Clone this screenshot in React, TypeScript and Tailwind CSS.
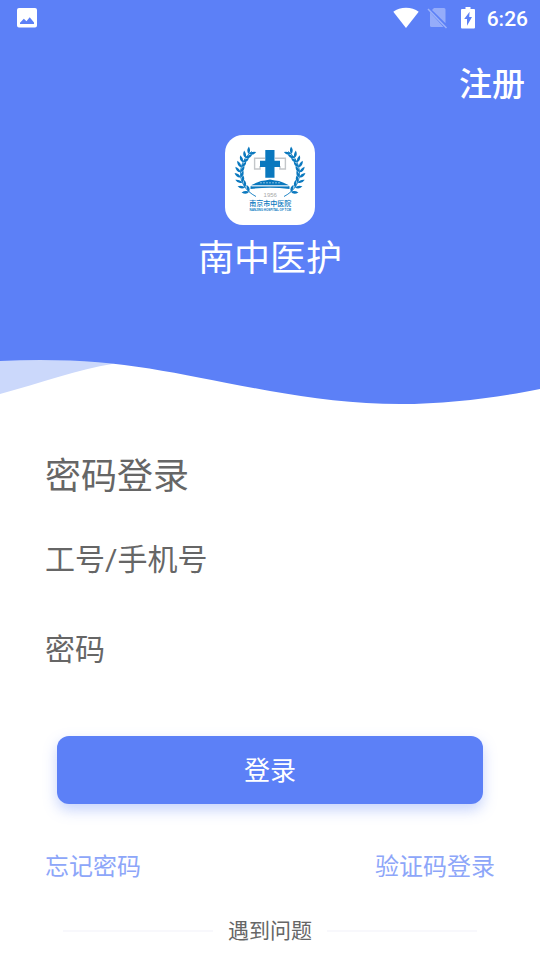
import React, { useState } from 'react';

// Leaf positions along the left branch, 0 = tip, 1 = root
const LEAVES = [0.08, 0.18, 0.28, 0.38, 0.48, 0.58, 0.68, 0.78, 0.88];

const bezier = (t: number, a: number, b: number, c: number, d: number) => {
  const u = 1 - t;
  return u * u * u * a + 3 * u * u * t * b + 3 * u * t * t * c + t * t * t * d;
};

const slope = (t: number, a: number, b: number, c: number, d: number) => {
  const u = 1 - t;
  return 3 * u * u * (b - a) + 6 * u * t * (c - b) + 3 * t * t * (d - c);
};

const Branch: React.FC = () => (
  <g fill="#0a78be">
    <path d="M27 16.500C13 26 9 50 31 61.500" fill="none" stroke="#0a78be" strokeWidth="0.9" />
    {LEAVES.map((t) => {
      const x = bezier(t, 27, 13, 9, 31);
      const y = bezier(t, 16.5, 26, 50, 61.5);
      const angle = (Math.atan2(-slope(t, 16.5, 26, 50, 61.5), -slope(t, 27, 13, 9, 31)) * 180) / Math.PI;
      return (
        <g key={t} transform={`translate(${x} ${y})`}>
          <path d="M0 0Q3-3.400 7.600-0.500Q3.500 2 0 0Z" transform={`rotate(${angle - 42})`} />
          <path d="M0 0Q3-2 7.600 0.500Q3.500 3.400 0 0Z" transform={`rotate(${angle + 24})`} />
        </g>
      );
    })}
  </g>
);

const Logo: React.FC = () => (
  <svg className="w-[90px] h-[90px] bg-white rounded-[18px]" viewBox="0 0 90 90">
    <Branch />
    <g transform="translate(90 0) scale(-1 1)">
      <Branch />
    </g>
    <path d="M40 23.2H29.6V34H35V31M50 23.2H60.4V34H55V31" fill="none" stroke="#c3c6c9" strokeWidth="1.4" />
    <path d="M40.3 15h9.2v10.7H55V32h-5.5v10.8h-9.2V32H35v-6.3h5.3z" fill="#0a78be" />
    <path d="M32 47.5Q36 45.8 40 45.6L45 44.6L50 45.6Q54 45.8 58 47.5L64 50.2H26z" fill="#0a78be" />
    <path d="M35 47.8H55" stroke="#fff" strokeWidth="0.5" strokeDasharray="2 1" />
    <path d="M25.5 54V51.2H64.5V54Q45 51.6 25.5 54Z" fill="#0a78be" />
    <path d="M27 51H63" stroke="#b5d5ec" strokeWidth="0.8" />
    <text x="45.3" y="62" textAnchor="middle" fill="#a8a8a8" className="text-[6px] font-['Liberation_Sans',sans-serif]">1956</text>
    <text x="45.3" y="70.6" textAnchor="middle" fill="#0a78be" className="text-[7px] font-medium font-['Noto_Sans_CJK_SC',sans-serif]">南京市中医院</text>
    <text x="45.3" y="75.6" textAnchor="middle" fill="#0a78be" className="text-[3px] font-bold font-['Liberation_Sans',sans-serif]">NANJING HOSPITAL OF TCM</text>
  </svg>
);

const StatusBar: React.FC = () => (
  <div className="flex items-center justify-between h-9 pl-4 pr-3">
    <svg className="w-[22px] h-[22px]" viewBox="0 0 22 22">
      <path fillRule="evenodd" fill="#fff" d="M3 1h16a2 2 0 0 1 2 2v15.500a2 2 0 0 1-2 2H3a2 2 0 0 1-2-2V3a2 2 0 0 1 2-2zM4 17h14v-1.500l-4.300-5.200-3.200 4-2.700-2.500L4 15.800z" />
    </svg>
    <div className="flex items-center">
      <svg className="w-[26px] h-[22px]" viewBox="0 0 26 22">
        <path d="M13 21L0.300 4.800C7-0.500 19-0.500 25.700 4.800z" fill="#fff" />
      </svg>
      <svg className="w-5 h-[22px] ml-2" viewBox="0 0 20 22">
        <g fill="#fff" fillOpacity="0.35">
          <path d="M7 1h10a1.500 1.500 0 0 1 1.500 1.500V16.200L5 3z" />
          <path d="M3 5.300V18.500A1.500 1.500 0 0 0 4.500 20H16.500z" />
        </g>
        <path d="M1 2L19.500 21" stroke="#fff" strokeOpacity="0.4" strokeWidth="1.500" />
      </svg>
      <svg className="w-[14px] h-[22px] ml-[14px]" viewBox="0 0 14 22">
        <path fillRule="evenodd" fill="#fff" d="M4.500 0h5v2H13a1 1 0 0 1 1 1v17.500a1 1 0 0 1-1 1H1a1 1 0 0 1-1-1V3a1 1 0 0 1 1-1h3.500zM8.600 4.800L3.200 12H6v6.700L11 10H8.200z" />
      </svg>
      <span className="ml-3 pt-0.5 text-[21px] leading-6 font-medium text-white font-[Roboto,sans-serif]">6:26</span>
    </div>
  </div>
);

const Wave: React.FC = () => (
  <svg className="block w-full h-[50px]" viewBox="0 0 540 50" preserveAspectRatio="none">
    <path d="M0 0V39C40 28 80 14 112 9L130 0Z" fill="#cbd8fb" />
    <path d="M0 0V6Q20 5 40 5C130 5 180 20 270 36C310 43 355 49 400 49C450 49 500 42 540 34V0Z" fill="#5c80f7" />
  </svg>
);

interface FieldProps {
  label: string;
  type: string;
  value: string;
  onChange: (value: string) => void;
}

const Field: React.FC<FieldProps> = ({ label, type, value, onChange }) => (
  <input
    type={type}
    aria-label={label}
    placeholder={label}
    value={value}
    onChange={(e) => onChange(e.target.value)}
    className="block w-full h-[60px] text-[30px] text-[#666] placeholder:text-[#666] outline-none"
  />
);

export default function App() {
  const [account, setAccount] = useState('');
  const [password, setPassword] = useState('');

  return (
    <div className="min-h-screen bg-white text-[#666] font-[Roboto,'Noto_Sans_CJK_SC',sans-serif]">
      <header>
        <div className="bg-[#5c80f7] pb-[72px]">
          <StatusBar />
          <div className="flex justify-end pt-[25px] px-[15px]">
            <a href="#register" className="text-[33px] leading-[48px] font-medium text-white">注册</a>
          </div>
          <div className="flex flex-col items-center pt-[26px]">
            <Logo />
            <h1 className="mt-[10px] text-4xl leading-[48px] text-white">南中医护</h1>
          </div>
        </div>
        <Wave />
      </header>

      <main className="px-[45px] pt-12 pb-3">
        <form onSubmit={(e) => e.preventDefault()}>
          <h2 className="text-4xl leading-[48px]">密码登录</h2>
          <div className="flex flex-col gap-[30px] mt-7">
            <Field label="工号/手机号" type="text" value={account} onChange={setAccount} />
            <Field label="密码" type="password" value={password} onChange={setPassword} />
          </div>
          <div className="px-3 mt-[57px]">
            <button
              type="submit"
              className="block w-full h-[68px] rounded-xl bg-[#5c80f7] pt-0.5 text-[26px] text-white shadow-[0_6px_14px_rgba(92,128,247,0.35)]"
            >
              登录
            </button>
          </div>
        </form>

        <div className="flex justify-between mt-[45px] text-2xl leading-9 text-[#8da6f9]">
          <a href="#forgot">忘记密码</a>
          <a href="#code">验证码登录</a>
        </div>

        <div className="flex items-center gap-[15px] px-[18px] mt-[30px]">
          <span className="flex-1 h-0.5 bg-[#f8f8fc]" />
          <span className="text-[21px] leading-8">遇到问题</span>
          <span className="flex-1 h-0.5 bg-[#f8f8fc]" />
        </div>
      </main>
    </div>
  );
}
